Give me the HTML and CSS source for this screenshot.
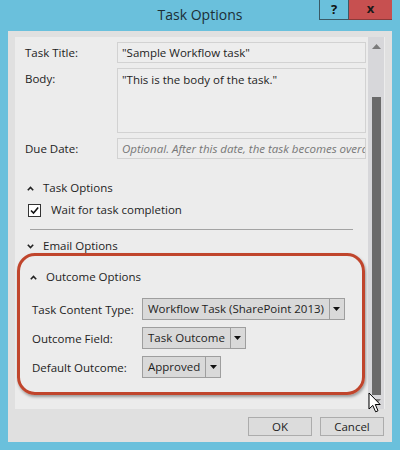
FILE: index.html
```html
<!DOCTYPE html>
<html>
<head>
<meta charset="utf-8">
<link rel="stylesheet" href="styles.css">
</head>
<body>
<div class="window">
  <div class="titlebar">
    <div class="spacer"></div>
    <div class="title">Task Options</div>
    <div class="ctrls">
      <div class="help">?</div>
      <div class="close">x</div>
    </div>
  </div>
  <div class="client">
    <div class="panel">
      <div class="content">
        <div class="form">
          <div class="label">Task Title:</div>
          <div class="field">"Sample Workflow task"</div>
          <div class="label">Body:</div>
          <div class="field area">"This is the body of the task."</div>
          <div class="label">Due Date:</div>
          <div class="field hint">Optional. After this date, the task becomes overdue.</div>
        </div>
        <div class="section sec-task">
          <svg class="caret" width="7" height="5" viewBox="0 0 7 5"><path d="M0.8 4.2 L3.5 1.5 L6.2 4.2" fill="none" stroke="#222" stroke-width="1.6"/></svg>
          <span>Task Options</span>
        </div>
        <div class="check">
          <div class="box"><svg width="11" height="11" viewBox="0 0 11 11"><path d="M2 5.5 L4.5 8 L9.2 2.5" fill="none" stroke="#111" stroke-width="1.6"/></svg></div>
          <span>Wait for task completion</span>
        </div>
        <div class="sep"></div>
        <div class="section sec-email">
          <svg class="caret" width="7" height="5" viewBox="0 0 7 5"><path d="M0.8 0.8 L3.5 3.5 L6.2 0.8" fill="none" stroke="#222" stroke-width="1.6"/></svg>
          <span>Email Options</span>
        </div>
        <div class="outcome">
          <div class="section sec-outcome">
            <svg class="caret" width="7" height="5" viewBox="0 0 7 5"><path d="M0.8 4.2 L3.5 1.5 L6.2 4.2" fill="none" stroke="#222" stroke-width="1.6"/></svg>
            <span>Outcome Options</span>
          </div>
          <div class="orow">
            <div class="olabel">Task Content Type:</div>
            <div class="dd"><span class="ddtext">Workflow Task (SharePoint 2013)</span><span class="ddarrow"><svg width="7" height="4" viewBox="0 0 7 4"><path d="M0 0 H7 L3.5 4 Z" fill="#111"/></svg></span></div>
          </div>
          <div class="orow">
            <div class="olabel">Outcome Field:</div>
            <div class="dd"><span class="ddtext">Task Outcome</span><span class="ddarrow"><svg width="7" height="4" viewBox="0 0 7 4"><path d="M0 0 H7 L3.5 4 Z" fill="#111"/></svg></span></div>
          </div>
          <div class="orow">
            <div class="olabel">Default Outcome:</div>
            <div class="dd"><span class="ddtext">Approved</span><span class="ddarrow"><svg width="7" height="4" viewBox="0 0 7 4"><path d="M0 0 H7 L3.5 4 Z" fill="#111"/></svg></span></div>
          </div>
        </div>
      </div>
      <div class="scrollbar">
        <svg class="sarrow" width="9" height="5" viewBox="0 0 9 5"><path d="M0 5 L4.5 0 L9 5 Z" fill="#7b7b7b"/></svg>
        <div class="track"><div class="thumb"></div></div>
        <svg class="sarrow" width="9" height="5" viewBox="0 0 9 5"><path d="M0 0 L4.5 5 L9 0 Z" fill="#7b7b7b"/></svg>
      </div>
    </div>
    <div class="buttons">
      <div class="btn">OK</div>
      <div class="btn">Cancel</div>
    </div>
  </div>
  <svg class="cursor" width="14" height="22" viewBox="0 0 14 22"><path d="M1 1 L1 17 L4.8 13.4 L7.6 19.8 L10 18.8 L7.3 12.5 L12.2 12.5 Z" fill="#fff" stroke="#000" stroke-width="1" stroke-linejoin="round"/></svg>
</div>
</body>
</html>
```

FILE: styles.css
```css
* { box-sizing: border-box; }
html, body { margin: 0; padding: 0; }
body {
  font-family: "Open Sans", "Noto Sans", sans-serif;
  font-size: 11.5px;
  color: #1e1e1e;
  background: #69bfdc;
}
.window {
  position: relative;
  width: 400px;
  height: 450px;
  background: #6ac0dc;
  display: flex;
  flex-direction: column;
}
.titlebar {
  height: 31px;
  display: grid;
  grid-template-columns: 1fr auto 1fr;
  padding: 0 8px;
}
.title {
  font-size: 14px;
  line-height: 30px;
  color: #1c2f36;
}
.ctrls {
  display: flex;
  justify-self: end;
  align-items: flex-start;
  height: 20px;
}
.help {
  width: 29px;
  height: 20px;
  border: 1px solid #3a5a66;
  border-top: none;
  border-right: none;
  text-align: center;
  font-weight: bold;
  font-size: 13px;
  line-height: 18px;
  color: #111;
}
.close {
  width: 44px;
  height: 20px;
  background: #c75050;
  border-left: 1px solid #3a5a66;
  border-bottom: 1px solid #8a3a3a;
  text-align: center;
  font-weight: bold;
  font-size: 13px;
  line-height: 16px;
  color: #1a1a1a;
}
.client {
  flex: 1;
  margin: 0 8px 8px;
  background: #e0e0e0;
  padding: 6px 7px 0;
  display: flex;
  flex-direction: column;
}
.panel {
  height: 372px;
  background: #ececec;
  display: flex;
  overflow: hidden;
}
.content {
  width: 353px;
  padding-top: 5px;
  overflow: hidden;
}
.form {
  display: grid;
  grid-template-columns: 92px 249px;
  row-gap: 5px;
  padding-left: 10px;
}
.label {
  line-height: 21px;
  color: #222;
}
.field {
  height: 21px;
  border: 1px solid #d2d2d2;
  background: #ededed;
  padding: 0 4px;
  line-height: 19px;
  white-space: nowrap;
  overflow: hidden;
  color: #1e1e1e;
}
.field.area {
  height: 65px;
  padding-top: 3px;
  line-height: 16px;
}
.hint {
  font-style: italic;
  color: #777;
}
.section {
  display: flex;
  align-items: center;
  gap: 9px;
  line-height: 16px;
  padding-left: 12px;
  color: #1e1e1e;
}
.sec-task { margin-top: 21px; }
.check {
  display: flex;
  align-items: center;
  gap: 10px;
  padding-left: 13px;
  margin-top: 6px;
  line-height: 16px;
}
.box {
  width: 13px;
  height: 13px;
  border: 1px solid #333;
  background: #fff;
  display: flex;
  align-items: center;
  justify-content: center;
}
.sep {
  margin: 11px 0 0 15px;
  width: 323px;
  height: 1px;
  background: #a3a3a3;
}
.sec-email { margin-top: 8px; }
.outcome {
  margin: -1px 0 0 2px;
  width: 348px;
  border: 3px solid #c0452c;
  border-radius: 18px;
  box-shadow: 1px 2px 3px rgba(0,0,0,0.35);
  padding: 13px 0 14px 0;
}
.sec-outcome { padding-left: 10px; }
.orow {
  display: grid;
  grid-template-columns: 110px auto;
  justify-content: start;
  align-items: center;
  padding-left: 12px;
  margin-top: 7px;
}
.sec-outcome + .orow { margin-top: 13px; }
.olabel { color: #222; }
.dd {
  display: flex;
  height: 22px;
  border: 1px solid #9e9e9e;
  background: #d9d9d9;
}
.ddtext {
  padding: 0 5px;
  line-height: 20px;
  white-space: nowrap;
}
.ddarrow {
  width: 15px;
  border-left: 1px solid #9e9e9e;
  display: flex;
  align-items: center;
  justify-content: center;
}
.scrollbar {
  width: 16px;
  background: #d7d7da;
  display: flex;
  flex-direction: column;
  align-items: center;
  padding: 7px 0 5px;
}
.track {
  flex: 1;
  width: 9px;
  padding-top: 48px;
  padding-bottom: 4px;
  display: flex;
}
.thumb {
  flex: 1;
  background: #6a6a6a;
}
.buttons {
  display: flex;
  justify-content: flex-end;
  gap: 8px;
  margin-top: 8px;
  padding-right: 1px;
}
.btn {
  width: 64px;
  height: 19px;
  border: 1px solid #acacac;
  background: #dcdcdc;
  text-align: center;
  line-height: 17px;
  color: #1e1e1e;
}
.cursor {
  position: absolute;
  left: 368px;
  top: 392px;
}
```
